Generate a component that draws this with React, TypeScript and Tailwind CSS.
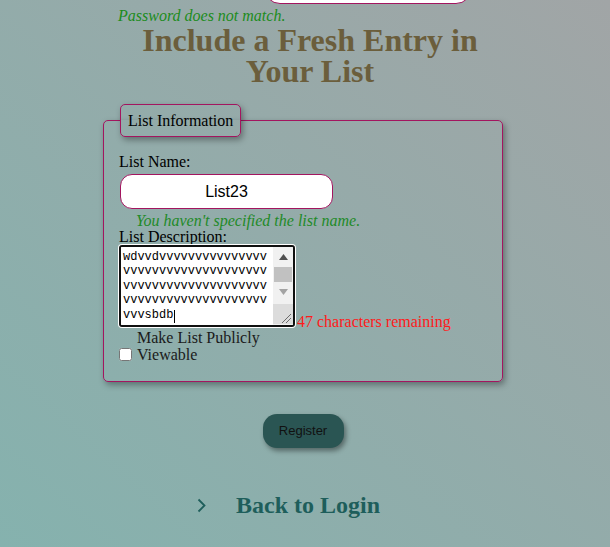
import React from "react";

const serif = { fontFamily: '"Liberation Serif", "Times New Roman", serif' };

const descText =
  "wdvvdvvvvvvvvvvvvvvv\nvvvvvvvvvvvvvvvvvvvv\nvvvvvvvvvvvvvvvvvvvv\nvvvvvvvvvvvvvvvvvvvv\nvvvsbdb";

// drawn scrollbar so it matches the classic look in the screenshot
function FakeScrollbar() {
  return (
    <div className="flex w-[20px] shrink-0 flex-col bg-[#f1f1f1]">
      <div className="flex h-[19px] items-center justify-center">
        <svg width="9" height="6" viewBox="0 0 9 6">
          <polygon points="4.5,0 9,6 0,6" fill="#505050" />
        </svg>
      </div>
      <div className="mx-[1px] mt-[1px] h-[15px] bg-[#c1c1c1]" />
      <div className="h-[3px]" />
      <div className="flex h-[14px] items-center justify-center">
        <svg width="9" height="6" viewBox="0 0 9 6">
          <polygon points="0,0 9,0 4.5,6" fill="#a3a3a3" />
        </svg>
      </div>
      <div className="h-[5px]" />
      <div className="relative h-[20px] bg-[#dcdcdc]">
        <svg width="20" height="20" viewBox="0 0 20 20" className="absolute right-0 bottom-0">
          <line x1="9" y1="19" x2="18" y2="10" stroke="#6b6b6b" strokeWidth="1" />
          <line x1="13" y1="19" x2="18" y2="14" stroke="#6b6b6b" strokeWidth="1" />
        </svg>
      </div>
    </div>
  );
}

function App() {
  return (
    <div
      className="min-h-screen overflow-hidden bg-[linear-gradient(to_top_right,#85b2ae,#a1a5a6)] text-black"
      style={serif}
    >
      <div className="ml-[103px] w-[400px]">
        {/* password field cut off at the top */}
        <div className="ml-[161px] mt-[-31px] h-[35px] w-[208px] rounded-2xl border border-[#a3155f] bg-white" />
        <p className="ml-[15px] mt-[4px] text-base leading-[16px] italic text-[#1c8c1c]">
          Password does not match.
        </p>

        <h1 className="mt-[1px] pl-[14px] text-center text-[32px] leading-[31px] font-bold text-[#6b5e3c]">
          Include a Fresh Entry in Your List
        </h1>

        <fieldset className="mt-[17px] rounded-[5px] border border-[#a3155f] px-[15px] pb-[18px] pt-4 shadow-[2px_3px_6px_rgba(0,0,0,0.35)]">
          <legend className="ml-[1px] rounded-[5px] border border-[#a3155f] px-[7px] py-[6px] text-base leading-[19px] shadow-[2px_3px_6px_rgba(0,0,0,0.35)]">
            List Information
          </legend>

          <label className="block text-base leading-[18px]">List Name:</label>
          <input
            type="text"
            defaultValue="List23"
            className="ml-[1px] mt-[3px] block h-[35px] w-[213px] rounded-xl border border-[#a3155f] bg-white text-center text-base text-black outline-none"
            style={{ fontFamily: '"Liberation Sans", Arial, sans-serif' }}
          />
          <p className="ml-[17px] mt-[3px] text-base leading-[17px] italic text-[#1f8a28]">
            You haven't specified the list name.
          </p>

          <label className="block text-base leading-[16px]">List Description:</label>
          <div className="flex items-end">
            <div className="relative flex h-[82px] w-[176px] shrink-0 overflow-hidden rounded-[3px] border-2 border-[#101010] bg-white shadow-[0_0_0_1px_#ffffff]">
              <textarea
                defaultValue={descText}
                className="h-full min-w-0 flex-1 resize-none overflow-hidden bg-white px-[2px] pt-[3px] text-[12px] leading-[14.4px] text-black outline-none"
                style={{ fontFamily: '"Liberation Mono", "Courier New", monospace' }}
              />
              {/* text caret */}
              <span className="absolute left-[53px] top-[63px] h-[13px] w-[1px] bg-black" />
              <FakeScrollbar />
            </div>
            <span className="mb-[-1px] ml-[2px] text-base leading-[12px] text-[#ff1a1a]">
              47 characters remaining
            </span>
          </div>

          <div className="mt-[2px] flex items-end">
            <input
              type="checkbox"
              className="mb-[2px] h-[13px] w-[13px] shrink-0 rounded-[2px]"
            />
            <span className="ml-[5px] w-[132px] text-base leading-[17px] text-[#1a1a1a]">
              Make List Publicly Viewable
            </span>
          </div>
        </fieldset>

        <div className="mt-[32px] flex justify-center">
          <button
            className="h-[34px] w-[81px] rounded-[14px] bg-[#2a5553] text-[13px] text-[#111] shadow-[2px_3px_5px_rgba(0,0,0,0.4)]"
            style={{ fontFamily: '"Liberation Sans", Arial, sans-serif' }}
          >
            Register
          </button>
        </div>

        <div className="ml-[94px] mt-[41px] flex items-center gap-[30px]">
          <svg width="9" height="15" viewBox="0 0 9 15" className="mt-[1px]">
            <polyline points="1.5,1.5 7.5,7.5 1.5,13.5" fill="none" stroke="#1e5e5b" strokeWidth="1.8" />
          </svg>
          <span className="text-2xl font-bold text-[#1e5e5b]">Back to Login</span>
        </div>
      </div>
    </div>
  );
}

export default App;
